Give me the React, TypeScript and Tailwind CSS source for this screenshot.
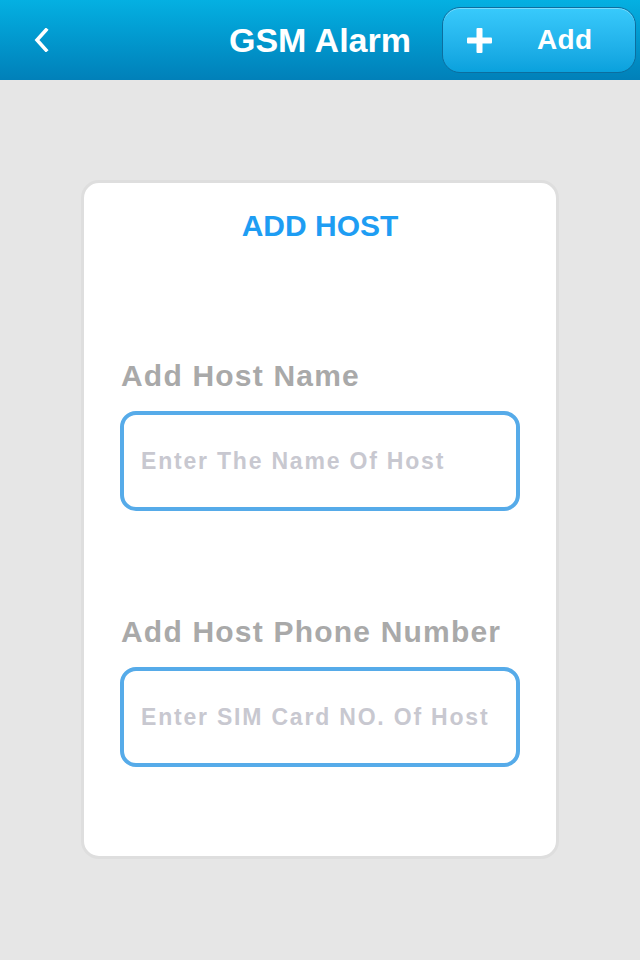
import React from "react";

const font = { fontFamily: '"Liberation Sans", Arial, sans-serif' };

function Field({ label, placeholder, className = "" }: { label: string; placeholder: string; className?: string }) {
  return (
    <div className={"flex flex-col " + className}>
      <div className="text-[30px] leading-[29px] font-bold tracking-[1.2px] text-[#a9a9a9] pl-[1px] whitespace-nowrap">
        {label}
      </div>
      <div className="mt-[21px] h-[100px] rounded-[16px] border-[4px] border-[#56abe9] bg-white flex items-center pl-[17px]">
        <span className="text-[23px] font-bold tracking-[1.8px] text-[#c8c8d0] whitespace-nowrap">{placeholder}</span>
      </div>
    </div>
  );
}

export default function App() {
  return (
    <div className="w-[640px] h-[960px] bg-[#e6e6e6] flex flex-col" style={font}>
      <header className="h-[80px] bg-gradient-to-b from-[#04b0e2] to-[#0180b9] grid grid-cols-[1fr_auto_1fr] items-center">
        <div className="flex items-center pl-[33px]">
          <svg width="18" height="24" viewBox="0 0 18 24" fill="none">
            <path d="M13 2 L4 12 L13 22" stroke="white" strokeWidth="3.6" strokeLinecap="square" strokeLinejoin="miter" />
          </svg>
        </div>
        <div className="text-white font-bold text-[34px] leading-none">GSM Alarm</div>
        <div className="flex justify-end pr-[4px]">
          <div className="w-[194px] h-[66px] rounded-[18px] border border-[#0c6e9f] bg-gradient-to-b from-[#38cafc] to-[#09a1dd] flex items-center shadow-[inset_0_1px_0_rgba(255,255,255,0.35)]">
            <svg className="ml-[24px]" width="25" height="25" viewBox="0 0 25 25">
              <rect x="9.5" y="0" width="6" height="25" rx="1" fill="white" />
              <rect x="0" y="9.5" width="25" height="6" rx="1" fill="white" />
            </svg>
            <span className="ml-[45px] text-white font-bold text-[28px] leading-none tracking-[0.3px]">Add</span>
          </div>
        </div>
      </header>

      <div className="mt-[100px] mx-auto w-[478px] h-[679px] rounded-[18px] border-[3px] border-[#dedede] bg-white flex flex-col items-center pt-[28px]">
        <div className="text-[30px] leading-[30px] font-bold text-[#1e9df3]">ADD HOST</div>
        <div className="w-[400px] flex flex-col mt-[120px]">
          <Field label="Add Host Name" placeholder="Enter The Name Of Host" />
          <Field label="Add Host Phone Number" placeholder="Enter SIM Card NO. Of Host" className="mt-[106px]" />
        </div>
      </div>
    </div>
  );
}
